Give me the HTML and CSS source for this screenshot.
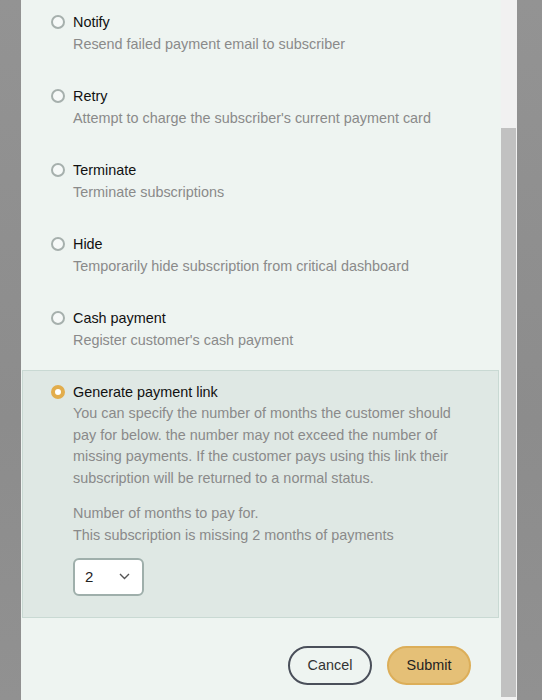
FILE: index.html
```html
<!DOCTYPE html>
<html lang="en">
<head>
  <meta charset="UTF-8">
  <meta name="viewport" content="width=device-width, initial-scale=1.0">
  <title>Failed payment actions</title>
  <link rel="stylesheet" href="styles.css">
</head>
<body>

  <div class="modal">
    <div class="modal-body">

      <div class="option">
        <span class="radio"></span>
        <div class="option-title">Notify</div>
        <div class="option-desc">Resend failed payment email to subscriber</div>
      </div>

      <div class="option">
        <span class="radio"></span>
        <div class="option-title">Retry</div>
        <div class="option-desc">Attempt to charge the subscriber's current payment card</div>
      </div>

      <div class="option">
        <span class="radio"></span>
        <div class="option-title">Terminate</div>
        <div class="option-desc">Terminate subscriptions</div>
      </div>

      <div class="option">
        <span class="radio"></span>
        <div class="option-title">Hide</div>
        <div class="option-desc">Temporarily hide subscription from critical dashboard</div>
      </div>

      <div class="option">
        <span class="radio"></span>
        <div class="option-title">Cash payment</div>
        <div class="option-desc">Register customer's cash payment</div>
      </div>

      <div class="option selected">
        <span class="radio"></span>
        <div class="option-title">Generate payment link</div>
        <div class="option-desc long">
          You can specify the number of months the customer should pay for below. the number may not exceed the number of missing payments. If the customer pays using this link their subscription will be returned to a normal status.
        </div>
        <div class="option-extra">
          <div class="option-desc">Number of months to pay for.</div>
          <div class="option-desc">This subscription is missing 2 months of payments</div>
          <div class="select">
            <span>2</span>
            <svg width="11" height="7" viewBox="0 0 11 7"><path d="M1 1l4.5 4.5L10 1" fill="none" stroke="#555" stroke-width="1.4"/></svg>
          </div>
        </div>
      </div>

      <div class="actions">
        <button class="btn btn-cancel">Cancel</button>
        <button class="btn btn-submit">Submit</button>
      </div>

    </div>
    <div class="scrollbar">
      <div class="scrollbar-thumb"></div>
    </div>
  </div>

</body>
</html>
```

FILE: styles.css
```css
body {
  font-family: 'Liberation Sans', Arial, sans-serif;
  font-size: 14.4px;
  margin: 0;
  padding: 0 25px 0 21px;
  height: 700px;
  overflow: hidden;
  background: linear-gradient(180deg, #939393 0%, #8c8c8c 60%, #919191 100%);
}

.modal {
  display: flex;
  width: 496px;
  height: 700px;
  background-color: #eef4f1;
}

.modal-body {
  width: 480px;
}

.option {
  display: grid;
  grid-template-columns: 14px 1fr;
  column-gap: 8px;
  padding: 10px 30px 18px 29px;
  border: 1px solid transparent;
  line-height: 22px;
}

.radio {
  width: 14px;
  height: 14px;
  margin-top: 4px;
  box-sizing: border-box;
  border: 2px solid #a6b0ad;
  border-radius: 50%;
  background-color: #f6f9f8;
}

.option-title {
  color: #111;
}

.option-desc,
.option-extra {
  grid-column: 2;
  color: #8a8a8a;
}

.option-desc.long {
  line-height: 21.7px;
}

.option.selected {
  background-color: #dfe8e4;
  border-color: #c9d9d3;
  margin: 0 2px 0 1px;
  padding-left: 28px;
  padding-bottom: 21px;
}

.option.selected .radio {
  border: 4px solid #e2ad4c;
  background-color: #fff;
}

.option-extra {
  margin-top: 12px;
}

.select {
  display: flex;
  align-items: center;
  justify-content: space-between;
  width: 71px;
  height: 38px;
  margin-top: 12px;
  padding: 0 12px 0 10px;
  box-sizing: border-box;
  border: 2px solid #9fafab;
  border-radius: 6px;
  background-color: #fff;
  color: #222;
  font-size: 15px;
}

.actions {
  display: flex;
  justify-content: flex-end;
  gap: 15px;
  padding: 28px 30px 0 0;
}

.btn {
  width: 84px;
  height: 39px;
  border-radius: 20px;
  font-family: inherit;
  font-size: 14.4px;
  cursor: pointer;
}

.btn-cancel {
  background: transparent;
  border: 2px solid #4a4f5a;
  color: #333;
}

.btn-submit {
  background-color: #e5c077;
  border: 2px solid #dcae59;
  color: #222;
}

.scrollbar {
  width: 16px;
  background-color: #f1f1f1;
}

.scrollbar-thumb {
  margin: 128px 1px 0 0;
  height: 569px;
  background-color: #c1c1c1;
}
```
